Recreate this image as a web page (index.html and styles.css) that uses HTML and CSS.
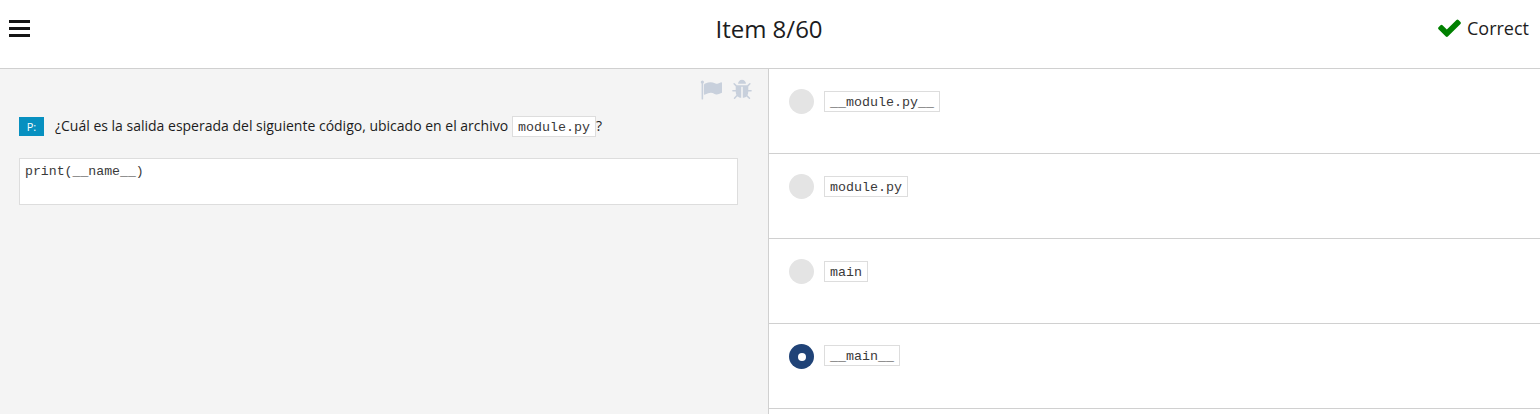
FILE: index.html
```html
<!DOCTYPE html>
<html lang="es">
<head>
<meta charset="utf-8">
<title>Item 8/60</title>
<link rel="stylesheet" href="styles.css">
</head>
<body>
<header class="topbar">
  <svg class="menu" viewBox="0 0 21 17"><path d="M0 0h21v3H0zM0 7h21v3H0zM0 14h21v3H0z"/></svg>
  <h1 class="title">Item 8/60</h1>
  <div class="status">
    <svg class="check" viewBox="121 298 1550 1224"><path d="M1671 566q0 40-28 68l-724 724-136 136q-28 28-68 28t-68-28l-136-136-362-362q-28-28-28-68t28-68l136-136q28-28 68-28t68 28l294 295 656-657q28-28 68-28t68 28l136 136q28 28 28 68z"/></svg>
    <span>Correct</span>
  </div>
</header>
<main class="content">
  <section class="question">
    <div class="tools">
      <svg class="flag" viewBox="0 0 1792 1792"><path d="M320 256q0 72-64 110v1266q0 13-9.500 22.500t-22.500 9.500h-64q-13 0-22.500-9.500t-9.500-22.500v-1266q-64-38-64-110 0-53 37.500-90.500t90.500-37.500 90.500 37.500 37.500 90.500zm1472 64v763q0 25-12.500 38.500t-39.500 27.500q-215 116-369 116-61 0-123.500-22t-108.500-48-115.500-48-142.500-22q-192 0-464 146-17 9-33 9-26 0-45-19t-19-45v-742q0-32 31-55 21-14 79-43 236-120 421-120 107 0 200 29t219 88q38 19 88 19 54 0 117.500-21t110-47 88-47 54.500-21q26 0 45 19t19 45z"/></svg>
      <svg class="bug" viewBox="0 0 1792 1792"><path d="M1696 960q0 26-19 45t-45 19h-224q0 171-67 290l208 209q19 19 19 45t-19 45q-18 19-45 19t-45-19l-198-197q-5 5-15 13t-42 28.500-65 36.500-82 29-97 13v-896h-128v896q-51 0-101.500-13.500t-87-33-66-39-43.500-32.500l-15-14-183 207q-20 21-48 21-24 0-43-16-19-18-20.500-44.500t15.500-46.500l202-227q-58-114-58-274h-224q-26 0-45-19t-19-45 19-45 45-19h224v-294l-173-173q-19-19-19-45t19-45 45-19 45 19l173 173h844l173-173q19-19 45-19t45 19 19 45-19 45l-173 173v294h224q26 0 45 19t19 45zm-480-576h-640q0-133 93.500-226.500t226.500-93.500 226.500 93.500 93.500 226.500z"/></svg>
    </div>
    <div class="prompt">
      <span class="badge">P:</span>
      <span class="text">¿Cuál es la salida esperada del siguiente código, ubicado en el archivo</span>
      <code class="code">module.py</code><span class="text">?</span>
    </div>
    <pre class="snippet">print(__name__)</pre>
  </section>
  <section class="answers">
    <div class="answer"><span class="radio"></span><code class="code">__module.py__</code></div>
    <div class="answer"><span class="radio"></span><code class="code">module.py</code></div>
    <div class="answer"><span class="radio"></span><code class="code">main</code></div>
    <div class="answer selected"><span class="radio"></span><code class="code">__main__</code></div>
  </section>
</main>
</body>
</html>
```
FILE: styles.css
```css
* { box-sizing: border-box; }
body {
  margin: 0;
  height: 414px;
  overflow: hidden;
  background: #fff;
  color: #1c1c21;
  font-family: "Open Sans", sans-serif;
}
svg { display: block; }
.topbar {
  display: grid;
  grid-template-columns: 1fr auto 1fr;
  height: 69px;
  padding: 0 11px 0 9px;
  border-bottom: 1px solid #d0d0d0;
}
.menu { width: 21px; height: 17px; margin-top: 20px; fill: #151515; }
.title { margin: 12px 0 0; font-size: 24px; line-height: 33px; font-weight: 400; }
.status {
  display: flex;
  justify-content: flex-end;
  gap: 5.5px;
  padding-top: 16px;
  font-size: 18px;
  line-height: 25px;
}
.check { width: 23px; height: 18px; margin-top: 3px; fill: #008000; }
.content { display: grid; grid-template-columns: 769px 1fr; height: 345px; }
.question {
  padding: 10px 30px 0 19px;
  background: #f4f4f4;
  border-right: 1px solid #d0d0d0;
}
.tools {
  display: flex;
  gap: 9.5px;
  height: 22px;
  margin-right: -15px;
  justify-content: flex-end;
  fill: #c8d0dc;
}
.flag, .bug { height: 22px; }
.flag { width: 22px; }
.bug { width: 22px; }
.prompt { display: flex; height: 21px; margin-top: 15px; font-size: 14px; line-height: 19px; }
.badge {
  width: 25px;
  height: 19px;
  margin: 1px 11px 0 0;
  background: #0790c0;
  color: #fff;
  font-size: 11px;
  line-height: 20px;
  text-align: center;
}
.prompt .code { margin-left: 4px; }
.code {
  height: 21px;
  padding: 1px 5px 0;
  background: #fff;
  border: 1px solid #ddd;
  color: #3a3a3a;
  font: 13.333px/20px "Liberation Mono", monospace;
}
.snippet {
  height: 47px;
  margin: 21px 0 0;
  padding: 5px;
  background: #fff;
  border: 1px solid #ddd;
  color: #3a3a3a;
  font: 13.2px/15px "Liberation Mono", monospace;
}
.answer {
  display: flex;
  align-items: flex-start;
  gap: 10px;
  height: 85px;
  padding: 20px 0 0 20px;
  border-bottom: 1px solid #d0d0d0;
}
.answer .code { margin-top: 2px; }
.radio { width: 25px; height: 25px; border-radius: 50%; background: #e4e4e4; }
.selected .radio { display: grid; place-items: center; background: #204377; }
.selected .radio::after { content: ""; width: 8px; height: 8px; border-radius: 50%; background: #fff; }
.answer.selected .code { margin-top: 1px; }
```
